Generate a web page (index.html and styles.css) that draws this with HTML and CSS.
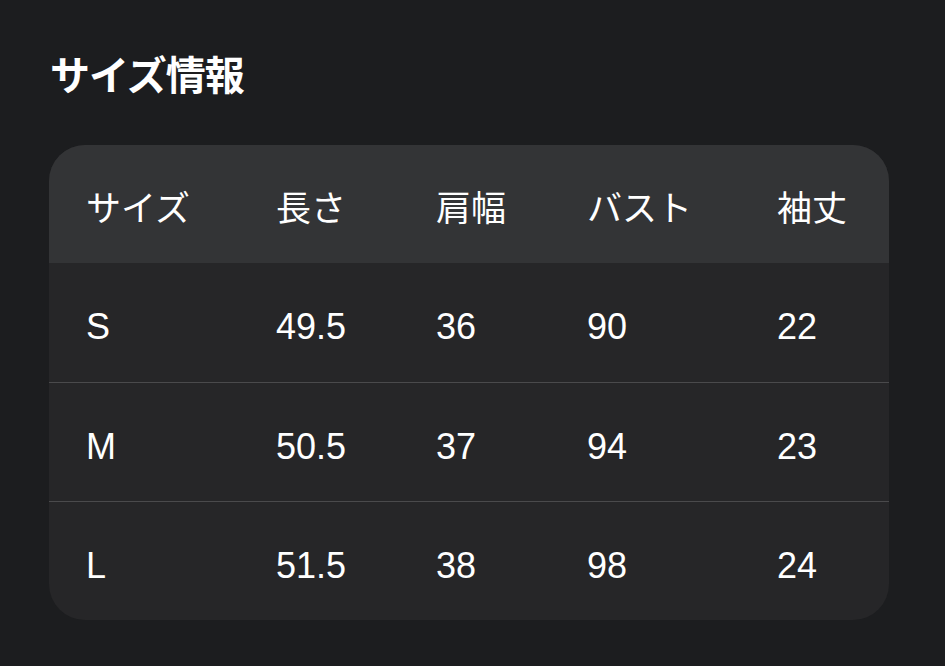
FILE: index.html
```html
<!DOCTYPE html>
<html lang="ja">
<head>
<meta charset="utf-8">
<link rel="stylesheet" href="styles.css">
</head>
<body>
<main class="page">
  <h1 class="title">サイズ情報</h1>
  <div class="card">
    <div class="row head">
      <div class="cell">サイズ</div>
      <div class="cell">長さ</div>
      <div class="cell">肩幅</div>
      <div class="cell">バスト</div>
      <div class="cell">袖丈</div>
    </div>
    <div class="row body">
      <div class="cell">S</div>
      <div class="cell">49.5</div>
      <div class="cell">36</div>
      <div class="cell">90</div>
      <div class="cell">22</div>
    </div>
    <div class="row body">
      <div class="cell">M</div>
      <div class="cell">50.5</div>
      <div class="cell">37</div>
      <div class="cell">94</div>
      <div class="cell">23</div>
    </div>
    <div class="row body">
      <div class="cell">L</div>
      <div class="cell">51.5</div>
      <div class="cell">38</div>
      <div class="cell">98</div>
      <div class="cell">24</div>
    </div>
  </div>
</main>
</body>
</html>
```

FILE: styles.css
```css
html, body {
  margin: 0;
  padding: 0;
  background: #1c1d1f;
}
body {
  font-family: "Liberation Sans", "Noto Sans CJK JP", sans-serif;
  color: #ffffff;
}
.page {
  padding: 47px 56px 0 49px;
}
.title {
  margin: 0 0 0 1px;
  font-family: "Noto Sans CJK JP", sans-serif;
  font-size: 40px;
  font-weight: 700;
  line-height: 52px;
  letter-spacing: -1px;
}
.card {
  margin-top: 46px;
  width: 840px;
  background: #262628;
  border-radius: 36px;
  overflow: hidden;
}
.row {
  display: grid;
  grid-template-columns: 227px 160px 151px 190px 112px;
  height: 119px;
  align-items: center;
  font-size: 36px;
  box-sizing: border-box;
}
.row .cell:first-child {
  padding-left: 37px;
}
.row .cell {
  padding-top: 9px;
  line-height: 40px;
}
.row.body + .row.body {
  border-top: 1px solid #4a4a4c;
}
.row.head {
  background: #333436;
  height: 118px;
  font-size: 35px;
}
```
